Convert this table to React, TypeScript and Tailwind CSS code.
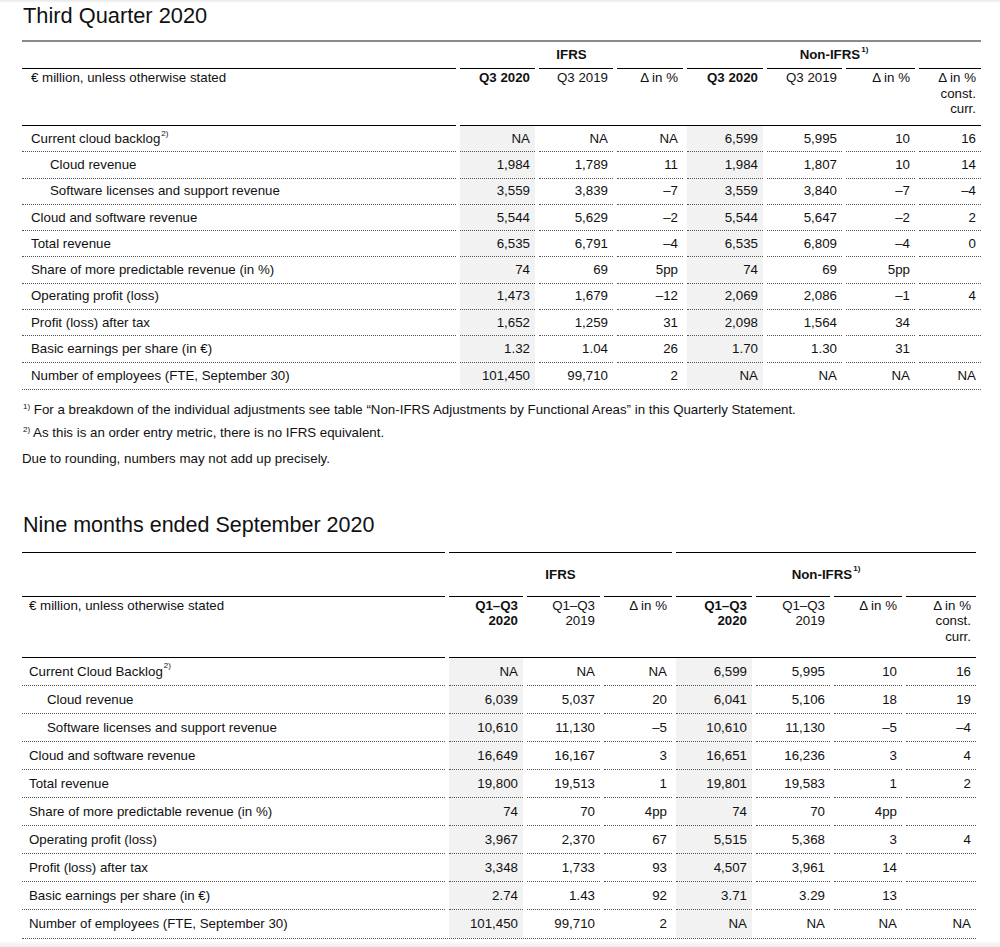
import React from 'react';

type Row = { label: string; sup?: string; indent?: boolean; values: string[] };
type Head = { lines: string[]; bold?: boolean };

const q3Rows: Row[] = [
  { label: 'Current cloud backlog', sup: '2)', values: ['NA', 'NA', 'NA', '6,599', '5,995', '10', '16'] },
  { label: 'Cloud revenue', indent: true, values: ['1,984', '1,789', '11', '1,984', '1,807', '10', '14'] },
  { label: 'Software licenses and support revenue', indent: true, values: ['3,559', '3,839', '–7', '3,559', '3,840', '–7', '–4'] },
  { label: 'Cloud and software revenue', values: ['5,544', '5,629', '–2', '5,544', '5,647', '–2', '2'] },
  { label: 'Total revenue', values: ['6,535', '6,791', '–4', '6,535', '6,809', '–4', '0'] },
  { label: 'Share of more predictable revenue (in %)', values: ['74', '69', '5pp', '74', '69', '5pp', ''] },
  { label: 'Operating profit (loss)', values: ['1,473', '1,679', '–12', '2,069', '2,086', '–1', '4'] },
  { label: 'Profit (loss) after tax', values: ['1,652', '1,259', '31', '2,098', '1,564', '34', ''] },
  { label: 'Basic earnings per share (in €)', values: ['1.32', '1.04', '26', '1.70', '1.30', '31', ''] },
  { label: 'Number of employees (FTE, September 30)', values: ['101,450', '99,710', '2', 'NA', 'NA', 'NA', 'NA'] },
];

const nineRows: Row[] = [
  { label: 'Current Cloud Backlog', sup: '2)', values: ['NA', 'NA', 'NA', '6,599', '5,995', '10', '16'] },
  { label: 'Cloud revenue', indent: true, values: ['6,039', '5,037', '20', '6,041', '5,106', '18', '19'] },
  { label: 'Software licenses and support revenue', indent: true, values: ['10,610', '11,130', '–5', '10,610', '11,130', '–5', '–4'] },
  { label: 'Cloud and software revenue', values: ['16,649', '16,167', '3', '16,651', '16,236', '3', '4'] },
  { label: 'Total revenue', values: ['19,800', '19,513', '1', '19,801', '19,583', '1', '2'] },
  { label: 'Share of more predictable revenue (in %)', values: ['74', '70', '4pp', '74', '70', '4pp', ''] },
  { label: 'Operating profit (loss)', values: ['3,967', '2,370', '67', '5,515', '5,368', '3', '4'] },
  { label: 'Profit (loss) after tax', values: ['3,348', '1,733', '93', '4,507', '3,961', '14', ''] },
  { label: 'Basic earnings per share (in €)', values: ['2.74', '1.43', '92', '3.71', '3.29', '13', ''] },
  { label: 'Number of employees (FTE, September 30)', values: ['101,450', '99,710', '2', 'NA', 'NA', 'NA', 'NA'] },
];

const q3Heads: Head[] = [
  { lines: ['Q3 2020'], bold: true },
  { lines: ['Q3 2019'] },
  { lines: ['Δ in %'] },
  { lines: ['Q3 2020'], bold: true },
  { lines: ['Q3 2019'] },
  { lines: ['Δ in %'] },
  { lines: ['Δ in %', 'const.', 'curr.'] },
];

const nineHeads: Head[] = [
  { lines: ['Q1–Q3', '2020'], bold: true },
  { lines: ['Q1–Q3', '2019'] },
  { lines: ['Δ in %'] },
  { lines: ['Q1–Q3', '2020'], bold: true },
  { lines: ['Q1–Q3', '2019'] },
  { lines: ['Δ in %'] },
  { lines: ['Δ in %', 'const.', 'curr.'] },
];

function Sup({ children }: { children: React.ReactNode }) {
  return <span className="relative -top-[5px] ml-[1px] text-[8px] leading-none">{children}</span>;
}

function Body({ rows, rowH, labelPad, indentPad }: { rows: Row[]; rowH: string; labelPad: string; indentPad: string }) {
  return (
    <>
      {rows.map((r, ri) => {
        const line = ri === rows.length - 1 ? '' : 'border-b border-dotted border-[#555]';
        return (
          <React.Fragment key={r.label}>
            <div className={`flex items-center ${rowH} ${r.indent ? indentPad : labelPad} ${line}`}>
              {r.label}
              {r.sup && <Sup>{r.sup}</Sup>}
            </div>
            {r.values.map((v, ci) => (
              <div
                key={ci}
                className={`flex items-center justify-end pr-[5px] ${rowH} ${ci === 0 || ci === 3 ? 'bg-[#f2f2f2]' : ''} ${line}`}
              >
                {v}
              </div>
            ))}
          </React.Fragment>
        );
      })}
      <div className="col-span-8 border-t border-dotted border-[#555]" />
    </>
  );
}

function Heads({ heads, headH, labelPad }: { heads: Head[]; headH: string; labelPad: string }) {
  return (
    <>
      <div className={`border-t border-black pt-[1px] leading-[15.5px] ${headH} ${labelPad}`}>
        € million, unless otherwise stated
      </div>
      {heads.map((h, i) => (
        <div
          key={i}
          className={`border-t border-black pt-[1px] pr-[5px] text-right leading-[15.5px] ${headH} ${h.bold ? 'font-bold' : ''}`}
        >
          {h.lines.map((l) => (
            <div key={l}>{l}</div>
          ))}
        </div>
      ))}
      {/* header bottom rule: label part + one line across all figures */}
      <div className="border-t border-black" />
      <div className="col-span-7 border-t border-black" />
    </>
  );
}

export default function App() {
  return (
    <div className="min-h-screen bg-white">
      <div className="w-[1000px] bg-white text-[13.3px] text-[#111] font-['Liberation_Sans',Arial,sans-serif]">
        <div className="h-[3px] bg-gradient-to-b from-[#e8e8e8] to-white" />

        {/* Third Quarter */}
        <h2 className="pl-[23px] text-[21.8px] leading-[26px]">Third Quarter 2020</h2>

        <div className="mt-[11px] ml-[22px] w-[959px] border-t-2 border-[#8a8a8a]">
          <div className="grid grid-cols-[434px_75px_74px_66px_76px_75px_69px_62px] gap-x-1">
            <div className="h-[26px]" />
            <div className="col-span-3 flex h-[26px] items-center justify-center font-bold">IFRS</div>
            <div className="col-span-4 flex h-[26px] items-center justify-center font-bold">
              Non-IFRS<Sup>1)</Sup>
            </div>
            <Heads heads={q3Heads} headH="h-[57px]" labelPad="pl-[9px]" />
            <Body rows={q3Rows} rowH="h-[26.3px]" labelPad="pl-[9px]" indentPad="pl-[28px]" />
          </div>
        </div>

        <div className="pl-[22px]">
          <p className="mt-[10px] leading-[20px]">
            <Sup>1)</Sup> For a breakdown of the individual adjustments see table “Non-IFRS Adjustments by Functional Areas” in
            this Quarterly Statement.
          </p>
          <p className="mt-[3px] leading-[20px]">
            <Sup>2)</Sup> As this is an order entry metric, there is no IFRS equivalent.
          </p>
          <p className="mt-[6px] leading-[20px]">Due to rounding, numbers may not add up precisely.</p>
        </div>

        {/* Nine months */}
        <h2 className="mt-[43px] pl-[23px] text-[21.5px] leading-[26px]">Nine months ended September 2020</h2>

        <div className="mt-[14px] ml-[22px] w-[954px]">
          <div className="grid grid-cols-[423px_74px_73px_68px_76px_74px_68px_70px] gap-x-1">
            <div className="h-[44px] border-t border-black" />
            <div className="col-span-3 flex h-[44px] items-center justify-center border-t border-black font-bold">IFRS</div>
            <div className="col-span-4 flex h-[44px] items-center justify-center border-t border-black font-bold">
              Non-IFRS<Sup>1)</Sup>
            </div>
            <Heads heads={nineHeads} headH="h-[61px]" labelPad="pl-[7px]" />
            <Body rows={nineRows} rowH="h-[28px]" labelPad="pl-[7px]" indentPad="pl-[25px]" />
          </div>
        </div>

        <div className="mt-[2px] h-[8px] bg-gradient-to-b from-white to-[#e6e6e6]" />
      </div>
    </div>
  );
}
